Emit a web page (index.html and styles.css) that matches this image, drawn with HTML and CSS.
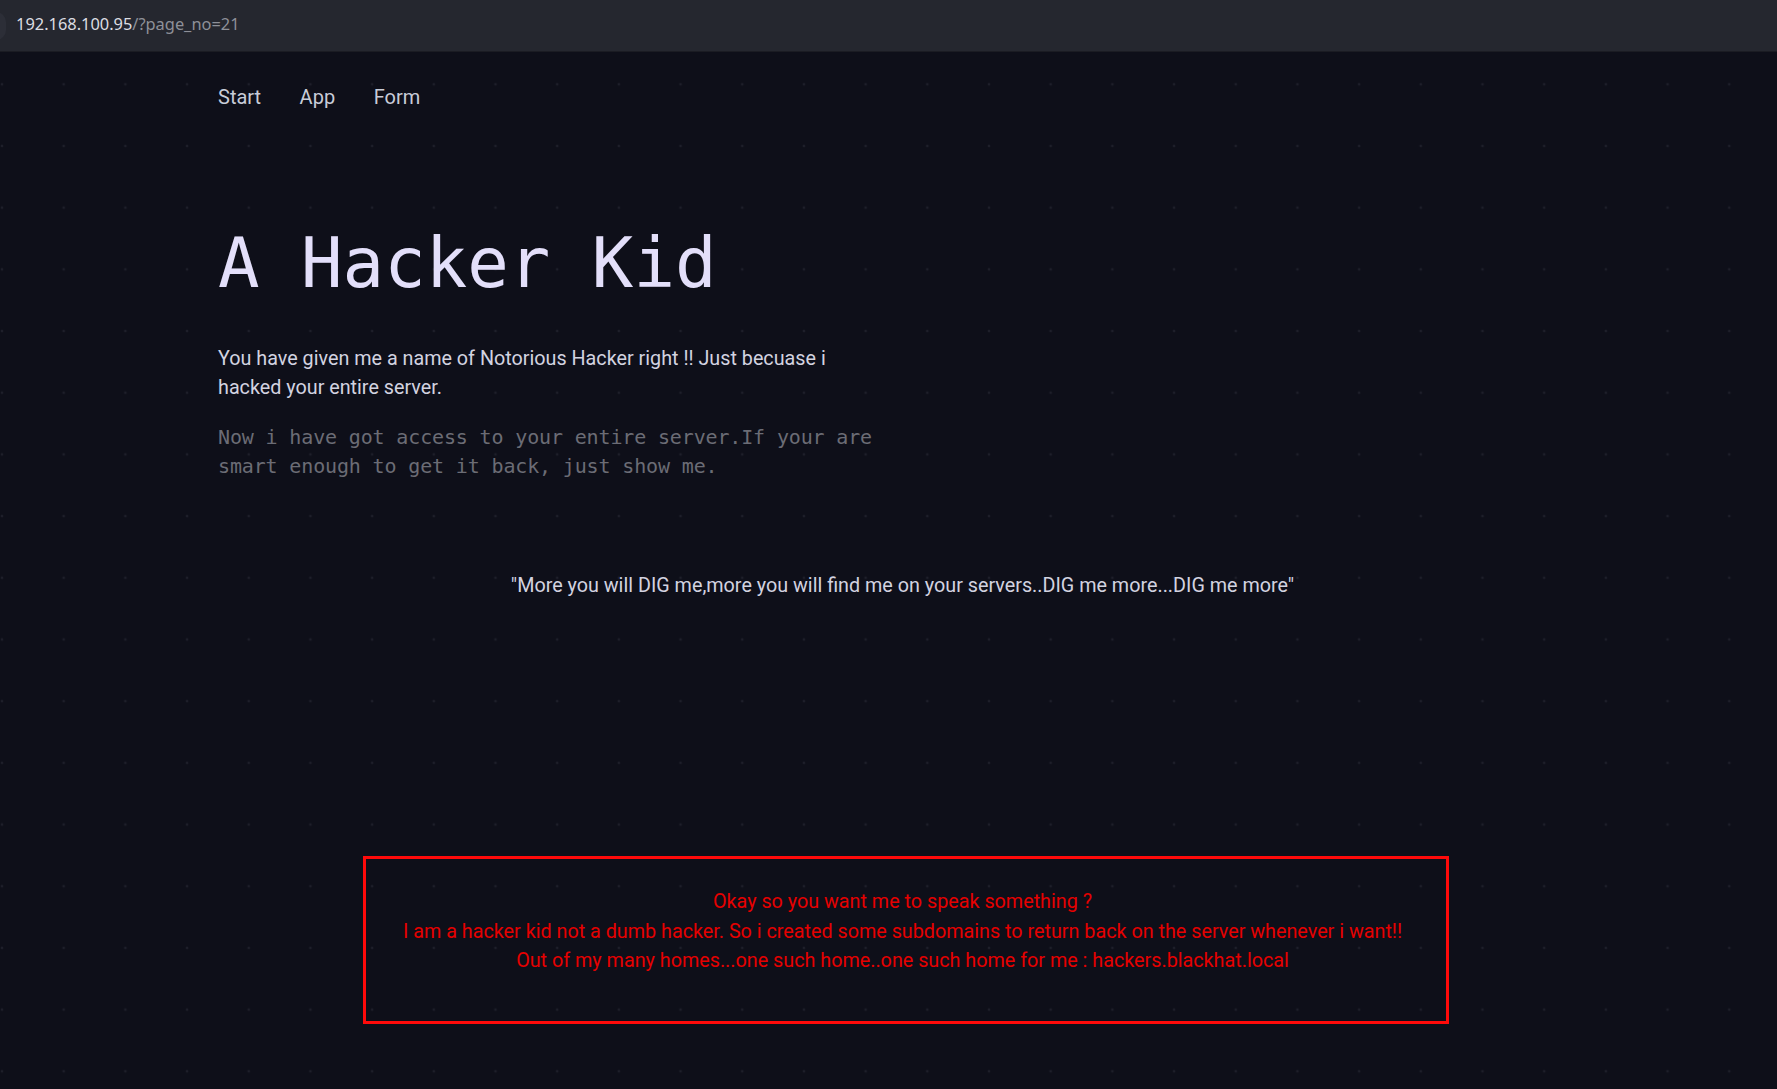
FILE: index.html
```html
<!DOCTYPE html>
<html lang="en">
<head>
<meta charset="utf-8">
<title>A Hacker Kid</title>
<link rel="stylesheet" href="styles.css">
</head>
<body>
<div class="urlbar"><span class="urlbar-dot"></span><span class="host">192.168.100.95</span><span class="path">/?page_no=21</span></div>
<div class="page">
  <nav class="nav">
    <a href="#">Start</a>
    <a href="#">App</a>
    <a href="#">Form</a>
  </nav>
  <main class="content">
    <h1 class="title">A Hacker Kid</h1>
    <p class="lead">You have given me a name of Notorious Hacker right !! Just becuase i hacked your entire server.</p>
    <p class="mono">Now i have got access to your entire server.If your are smart enough to get it back, just show me.</p>
    <p class="quote">"More you will DIG me,more you will find me on your servers..DIG me more...DIG me more"</p>
    <div class="alert">
      <p>Okay so you want me to speak something ?</p>
      <p>I am a hacker kid not a dumb hacker. So i created some subdomains to return back on the server whenever i want!!</p>
      <p>Out of my many homes...one such home..one such home for me : hackers.blackhat.local</p>
    </div>
  </main>
</div>
</body>
</html>
```
FILE: styles.css
```css
html, body {
  margin: 0;
  padding: 0;
}
body {
  min-height: 1089px;
  background-color: #0e0f19;
  background-image: radial-gradient(circle, #1e1f2a 0, #1e1f2a 1px, transparent 1.7px);
  background-size: 61.7px 61.7px;
  background-position: -28.85px 53.45px;
  font-family: Roboto, "Noto Sans", sans-serif;
  overflow: hidden;
}
.urlbar {
  position: relative;
  height: 52px;
  box-sizing: border-box;
  padding: 13px 0 0 16px;
  background: #25272f;
  font-family: "Noto Sans", sans-serif;
  font-size: 16.4px;
  line-height: 22px;
  border-bottom: 1px solid #1b1c23;
}
.urlbar-dot {
  position: absolute;
  left: -14px;
  top: 12px;
  width: 20px;
  height: 28px;
  border-radius: 10px;
  background: #2c2e37;
}
.host {
  color: #dcdde2;
}
.path {
  color: #8e9098;
}
.page {
  padding-top: 31px;
}
.nav {
  display: flex;
  gap: 38.5px;
  margin-left: 218px;
  font-size: 20px;
  line-height: 28px;
}
.nav a {
  color: #c8ccd8;
  text-decoration: none;
}
.content {
  margin-left: 218px;
  width: 1376px;
}
.title {
  margin: 118px 0 0;
  font-family: "DejaVu Sans Mono", monospace;
  font-weight: normal;
  font-size: 69px;
  line-height: 69px;
  color: #e3dffa;
}
.lead {
  margin: 45.6px 0 0;
  width: 660px;
  font-size: 19.75px;
  line-height: 29.5px;
  color: #d3d3e0;
}
.mono {
  margin: 20.2px 0 0;
  width: 680px;
  font-family: "DejaVu Sans Mono", monospace;
  font-size: 20px;
  letter-spacing: -0.15px;
  line-height: 29.5px;
  color: #6b6c75;
}
.quote {
  margin: 89.7px 0 0;
  padding-right: 7px;
  text-align: center;
  font-size: 19.75px;
  line-height: 29.5px;
  color: #d3d3e0;
}
.alert {
  width: 1086px;
  box-sizing: border-box;
  margin: 254.8px auto 0;
  padding: 28.3px 17px 45px 10px;
  border: 3px solid #ff0a0a;
  text-align: center;
  color: #e60000;
  font-size: 19.75px;
  line-height: 29.5px;
}
.alert p {
  margin: 0;
}
```
